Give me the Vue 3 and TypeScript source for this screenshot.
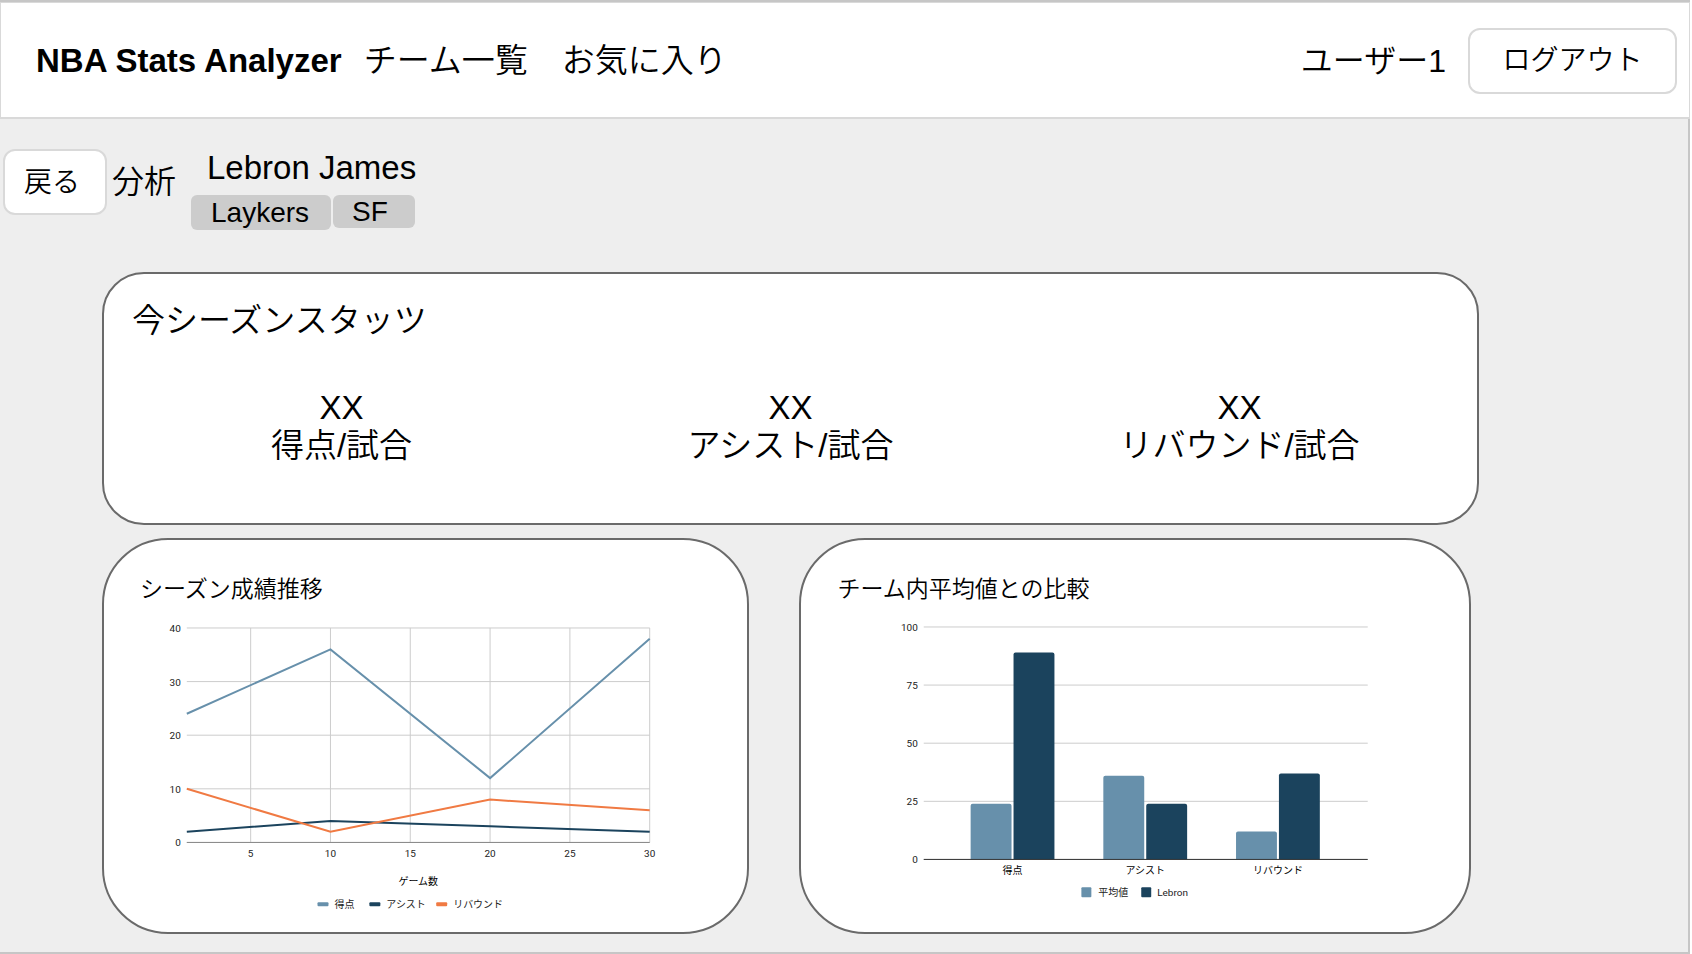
<script setup lang="ts">
interface Stat { value: string; label: string }
interface Series { name: string; color: string; points: [number, number][] }
interface Group { label: string; average: number; player: number }

const stats: Stat[] = [
  { value: 'XX', label: '得点/試合' },
  { value: 'XX', label: 'アシスト/試合' },
  { value: 'XX', label: 'リバウンド/試合' },
]

// Line chart: games on x (1 to 30), value on y (0 to 40)
const series: Series[] = [
  { name: '得点', color: '#6790ab', points: [[1, 24], [10, 36], [20, 12], [30, 38]] },
  { name: 'アシスト', color: '#1b435d', points: [[1, 2], [10, 4], [20, 3], [30, 2]] },
  { name: 'リバウンド', color: '#f07a43', points: [[1, 10], [10, 2], [20, 8], [30, 6]] },
]
const games = [5, 10, 15, 20, 25, 30]
const lineTicks = [0, 10, 20, 30, 40]
const gx = (game: number) => 67 + game * 16
const gy = (value: number) => 233 - (value * 215) / 40
const path = (s: Series) => s.points.map(([g, v]) => `${gx(g)},${gy(v)}`).join(' ')
const legendX = [214, 266, 333]

// Bar chart: grouped bars, value on y (0 to 100)
const groups: Group[] = [
  { label: '得点', average: 24, player: 89 },
  { label: 'アシスト', average: 36, player: 24 },
  { label: 'リバウンド', average: 12, player: 37 },
]
const barTicks = [0, 25, 50, 75, 100]
const bx = (i: number) => 212 + i * 133
const by = (value: number) => 250 - (value * 233) / 100
const bar = (x: number, value: number) => {
  const top = by(value)
  return `M${x} 250V${top + 2}q0-2 2-2h37q2 0 2 2V250z`
}
</script>

<template>
  <div class="page">
    <header class="header">
      <h1 class="brand">NBA Stats Analyzer</h1>
      <nav class="nav">
        <a href="#teams">チーム一覧</a>
        <a href="#favorites">お気に入り</a>
      </nav>
      <span class="user">ユーザー1</span>
      <button class="button logout" type="button">ログアウト</button>
    </header>

    <section class="player">
      <button class="button back" type="button">戻る</button>
      <span class="section-name">分析</span>
      <div class="profile">
        <h2 class="name">Lebron James</h2>
        <div class="tags">
          <span class="tag">Laykers</span>
          <span class="tag position">SF</span>
        </div>
      </div>
    </section>

    <main class="content">
      <section class="card summary">
        <h3 class="summary-title">今シーズンスタッツ</h3>
        <dl class="stats">
          <div v-for="s in stats" :key="s.label" class="stat">
            <dd>{{ s.value }}</dd>
            <dt>{{ s.label }}</dt>
          </div>
        </dl>
      </section>

      <div class="charts">
        <section class="card chart-card">
          <h3 class="chart-title">シーズン成績推移</h3>
          <svg class="chart" viewBox="0 0 645 310" role="img" aria-label="シーズン成績推移">
            <g class="grid">
              <line v-for="t in lineTicks" :key="t" x1="83" x2="547" :y1="gy(t)" :y2="gy(t)" />
              <line v-for="g in games" :key="g" y1="18" y2="233" :x1="gx(g)" :x2="gx(g)" />
            </g>
            <line class="base" x1="83" x2="547" y1="233" y2="233" />
            <polyline v-for="s in series" :key="s.name" class="trend" :points="path(s)" :stroke="s.color" />
            <text v-for="t in lineTicks" :key="t" class="end" x="77" :y="gy(t) + 4">{{ t }}</text>
            <text v-for="g in games" :key="g" class="mid" y="248" :x="gx(g)">{{ g }}</text>
            <text class="mid strong" x="315" y="276">ゲーム数</text>
            <g v-for="(s, i) in series" :key="s.name">
              <rect :x="legendX[i]" y="293" width="11" height="4" rx="1" :fill="s.color" />
              <text :x="legendX[i] + 17" y="299">{{ s.name }}</text>
            </g>
          </svg>
        </section>

        <section class="card chart-card">
          <h3 class="chart-title">チーム内平均値との比較</h3>
          <svg class="chart" viewBox="0 0 669 310" role="img" aria-label="チーム内平均値との比較">
            <g class="grid">
              <line v-for="t in barTicks" :key="t" x1="123" x2="568" :y1="by(t)" :y2="by(t)" />
            </g>
            <g v-for="(g, i) in groups" :key="g.label">
              <path :d="bar(bx(i) - 42, g.average)" fill="#6790ab" />
              <path :d="bar(bx(i) + 1, g.player)" fill="#1b435d" />
              <text class="mid strong" :x="bx(i)" y="265">{{ g.label }}</text>
            </g>
            <line class="axis" x1="123" x2="568" y1="250" y2="250" />
            <text v-for="t in barTicks" :key="t" class="end" x="117" :y="by(t) + 4">{{ t }}</text>
            <rect x="281" y="278" width="10" height="10" rx="1" fill="#6790ab" />
            <text x="298" y="287">平均値</text>
            <rect x="341" y="278" width="10" height="10" rx="1" fill="#1b435d" />
            <text x="357" y="287">Lebron</text>
          </svg>
        </section>
      </div>
    </main>
  </div>
</template>

<style>
body { margin: 0; background: #fff; }
</style>

<style scoped>
* { box-sizing: border-box; }
.page {
  min-height: 100vh;
  margin-right: 2px;
  padding-bottom: 16px;
  border: solid #c6c6c6;
  border-width: 2px 2px 2px 0;
  background: #eee;
  color: #000;
  font: 350 33px/38px "Liberation Sans", "Noto Sans CJK JP DemiLight", "Noto Sans CJK JP", sans-serif;
}
h1, h2, h3, dl, dd { margin: 0; font: inherit; }
.header {
  display: flex;
  align-items: center;
  height: 117px;
  margin-right: -2px;
  padding: 1px 12px 0 35px;
  border: 1px solid #d9d9d9;
  border-bottom-width: 2px;
  background: #fff;
}
.brand { font-weight: 700; margin-right: 22px; }
.nav { display: flex; gap: 34px; }
.nav a { color: inherit; text-decoration: none; }
.user { margin-left: auto; margin-right: 22px; font-size: 32px; }
.button {
  height: 66px;
  padding: 0;
  border: 2px solid #d9d9d9;
  border-radius: 12px;
  background: #fff;
  color: inherit;
  font: inherit;
  font-size: 28px;
}
.logout { width: 209px; }
.back { width: 104px; padding: 2px 6px 0 0; }
.player { display: flex; align-items: flex-start; padding: 30px 3px 0; }
.section-name { margin: 14px 15px 0 5px; font-size: 32px; }
.name { padding-left: 16px; }
.tags { display: flex; align-items: flex-start; gap: 2px; margin-top: 8px; }
.tag {
  padding: 0 22px 0 20px;
  border-radius: 6px;
  background: #ccc;
  font-size: 28px;
  line-height: 35px;
}
.position { padding: 0 27px 0 19px; line-height: 33px; }
.content { margin: 42px 209px 0 102px; }
.card { border: 2px solid #6a6a6a; background: #fff; }
.summary { padding: 28px 13px 58px; border-radius: 42px; }
.summary-title { padding-left: 15px; }
.stats { display: grid; grid-template-columns: repeat(3, 1fr); margin-top: 49px; text-align: center; }
.stat { display: flex; flex-direction: column; }
.charts {
  display: grid;
  grid-template-columns: 647fr 671fr;
  gap: 50px;
  margin: 13px 8px 0 0;
}
.chart-card { padding: 30px 0 13px; border-radius: 66px; }
.chart-title { padding-left: 36px; margin-bottom: 2px; font-size: 23px; }
.chart { display: block; width: 100%; }
.chart text { font: 400 10px Roboto, "Noto Sans CJK JP", sans-serif; fill: #222; }
.chart .end { text-anchor: end; }
.chart .mid { text-anchor: middle; }
.chart .strong { fill: #000; }
.grid line { stroke: #ccc; stroke-width: 1; }
.base { stroke: #888; stroke-width: 1; }
.axis { stroke: #333; stroke-width: 1; }
.trend { fill: none; stroke-width: 2; }
</style>
